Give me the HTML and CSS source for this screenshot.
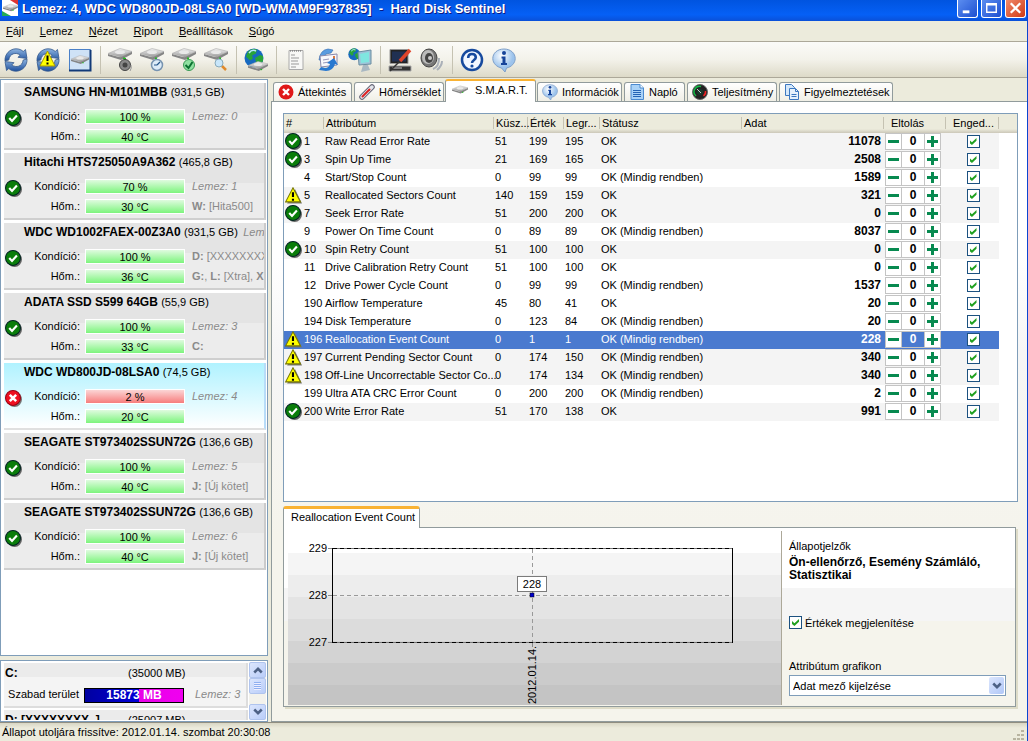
FILE: index.html
```html
<!DOCTYPE html>
<html lang="hu">
<head>
    <meta charset="UTF-8">
    <meta name="viewport" content="width=device-width, initial-scale=1.0">
    <title>Hard Disk Sentinel</title>
    <link rel="stylesheet" href="styles.css">
</head>
<body>
    <!-- Shared icons -->
    <svg class="defs" width="0" height="0">
        <linearGradient id="gDisk" x2="0" y2="1"><stop offset="0" stop-color="#f4f4f4"/><stop offset="1" stop-color="#999"/></linearGradient>
        <linearGradient id="gBlue" x2="0" y2="1"><stop offset="0" stop-color="#8fb6e2"/><stop offset="1" stop-color="#1d4f9c"/></linearGradient>
        <radialGradient id="gBall" cx=".4" cy=".3"><stop offset="0" stop-color="#fff"/><stop offset="1" stop-color="#9cc3ec"/></radialGradient>
        <symbol id="ok" viewBox="0 0 16 16">
            <circle cx="9" cy="9" r="7" fill="#666"/><circle cx="7.5" cy="7.5" r="7" fill="#0a7d0a" stroke="#022"/>
            <path d="M4 7.5l2.6 2.8L11.200 5.200" fill="none" stroke="#fff" stroke-width="2"/>
        </symbol>
        <symbol id="bad" viewBox="0 0 16 16">
            <circle cx="9" cy="9" r="7" fill="#777"/><circle cx="7.500" cy="7.500" r="7" fill="#ee1020" stroke="#901"/>
            <path d="M4.500 4.500l6 6M10.500 4.500l-6 6" stroke="#fff" stroke-width="2.400"/>
        </symbol>
        <symbol id="warn" viewBox="0 0 16 16">
            <path d="M9.500 2L16 15.500H2z" fill="#777"/><path d="M7.500.8L14.600 14H.6z" fill="#ff0" stroke="#770"/>
            <path d="M7.500 5v4.500M7.500 11v2" stroke="#000" stroke-width="2"/>
        </symbol>
        <symbol id="disk" viewBox="0 0 24 12">
            <path d="M0 6v2l13 4 11-6V3.500L11 9z" fill="#858585"/>
            <path d="M0 5.500L12 .5l12 3L12.500 9z" fill="url(#gDisk)" stroke="#aaa" stroke-width=".6"/>
            <ellipse cx="12" cy="4.300" rx="5" ry="1.800" fill="#e9e9e9"/><path d="M15 9.500h2v1.500h-2z" fill="#2b2"/>
        </symbol>
        <symbol id="sync" viewBox="0 0 24 24">
            <path d="M1 13C.5 6 6 .8 12 .8c3 0 5.500 1 7.200 2.700L21.500 1.500l1.500 9-9-1.200 2.200-2.200C12 3.800 5.500 5.500 4.800 12z" fill="url(#gBlue)" stroke="#34588c" stroke-width=".8"/>
            <path d="M23 11c.5 7-5 12.200-11 12.200-3 0-5.500-1-7.200-2.700L2.500 22.500 1 13.500l9 1.200-2.200 2.200C12 20.200 18.500 18.500 19.200 12z" fill="url(#gBlue)" stroke="#34588c" stroke-width=".8"/>
        </symbol>
        <symbol id="globe" viewBox="0 0 24 24">
            <circle cx="10" cy="10" r="9.500" fill="#1769c0"/>
            <path d="M4 3.500C7 .5 11 .5 13 1.500l-1 4-4 2 1 3-3 2-4-4zM11 10l5-3 3 1v5l-4 5-3-4z" fill="#28a43a"/>
            <path d="M5 5q3-4 7-2" stroke="#b9e6ff" fill="none" stroke-width="1.500"/>
        </symbol>
        <symbol id="speaker" viewBox="0 0 24 24">
            <ellipse cx="9" cy="10" rx="8" ry="9" fill="#777" stroke="#444"/><ellipse cx="8" cy="9" rx="6" ry="7" fill="#bbb"/>
            <ellipse cx="9" cy="10" rx="4" ry="5" fill="#444"/><circle cx="10" cy="10" r="2" fill="#ccc"/>
            <path d="M13 21q6-2 6-11M17 22q5-4 5-9" stroke="#aab0b8" stroke-width="2" fill="none"/>
        </symbol>
        <symbol id="info" viewBox="0 0 24 24">
            <path d="M12 1C5 1 .8 5.500.8 10.500S5 19 9.500 20l3.500 4 1.500-4c5-1 8.700-5 8.700-9.500C23.200 5.500 19 1 12 1z" fill="url(#gBall)" stroke="#7e9fc8"/>
            <circle cx="12" cy="5" r="2" fill="#17449a"/><path d="M9.500 8.500h4V15h1.500v2H9v-2h1.500v-4.500h-1z" fill="#17449a"/>
        </symbol>
        <symbol id="up" viewBox="0 0 8 6"><path d="M1 5l3-3 3 3" fill="none" stroke="#4d6185" stroke-width="2"/></symbol>
        <symbol id="down" viewBox="0 0 8 6"><path d="M1 1l3 3 3-3" fill="none" stroke="#4d6185" stroke-width="2"/></symbol>
    </svg>

    <!-- Title bar -->
    <header class="titlebar">
        <svg class="app-icon" viewBox="0 0 16 16"><path fill="#fff" d="M0 0h16v16H0z"/><path fill="#d33" d="M8 0h8v5z"/><path fill="#2a5" d="M0 11l9 5H0z"/><use href="#disk" x="1" y="3" width="15" height="9"/></svg>
        <h1>Lemez: 4, WDC WD800JD-08LSA0 [WD-WMAM9F937835] &nbsp;-&nbsp; Hard Disk Sentinel</h1>
        <div class="window-buttons">
            <button type="button" aria-label="Kis méret"><svg viewBox="0 0 20 17"><path d="M5 12h7" stroke="#fff" stroke-width="3"/></svg></button>
            <button type="button" aria-label="Teljes méret"><svg viewBox="0 0 20 17"><path d="M5 3.500h10v9H5zM5 4.500h10" fill="none" stroke="#fff" stroke-width="1.500"/></svg></button>
            <button type="button" class="close" aria-label="Bezárás"><svg viewBox="0 0 20 17"><path d="M5 3l10 10M15 3L5 13" stroke="#fff" stroke-width="2.400"/></svg></button>
        </div>
    </header>

    <!-- Menu -->
    <nav class="menu">
        <a href="#"><u>F</u>ájl</a>
        <a href="#"><u>L</u>emez</a>
        <a href="#"><u>N</u>ézet</a>
        <a href="#"><u>R</u>iport</a>
        <a href="#"><u>B</u>eállítások</a>
        <a href="#"><u>S</u>úgó</a>
    </nav>

    <!-- Toolbar -->
    <div class="toolbar">
        <button type="button" aria-label="Frissítés"><svg viewBox="0 0 24 24"><use href="#sync"/></svg></button>
        <button type="button" aria-label="Figyelmeztetés"><svg viewBox="0 0 24 24"><use href="#sync"/><path d="M11.500 3L19 18H4z" fill="#ff0" stroke="#a90"/><path d="M11.500 7.500v5.500M11.500 14.500v2" stroke="#000" stroke-width="2"/></svg></button>
        <button type="button" aria-label="Lemez"><svg viewBox="0 0 24 24"><path d="M1.500 1.500h21v21h-21z" fill="#cfe2f6" stroke="#4a80c8"/><path d="M1 22.500h21.500V2" fill="none" stroke="#123a78" stroke-width="2"/><use href="#disk" x="3" y="6" width="18" height="11"/></svg></button>
        <span class="sep"></span>
        <button type="button" aria-label="Hang teszt"><svg viewBox="0 0 24 24"><use href="#disk" width="24" height="12"/><path d="M17 10v4" stroke="#2b2" stroke-width="2"/><circle cx="17" cy="17" r="5.500" fill="#888" stroke="#444"/><circle cx="17" cy="17" r="2.500" fill="#444"/><path d="M22 23q2-3 1-6" stroke="#999" fill="none"/></svg></button>
        <button type="button" aria-label="Időzítés"><svg viewBox="0 0 24 24"><use href="#disk" width="24" height="12"/><circle cx="17" cy="17" r="5.500" fill="#dcebf8" stroke="#7793b0" stroke-width="1.500"/><path d="M17 17l3-3M17 17h-3" stroke="#258" stroke-width="1.200"/></svg></button>
        <button type="button" aria-label="Ellenőrzés"><svg viewBox="0 0 24 24"><use href="#disk" width="24" height="12"/><circle cx="17" cy="17" r="5.500" fill="#8fe0a0" stroke="#3a9a55"/><path d="M13.500 17l3 3 4-6" fill="none" stroke="#0a7030" stroke-width="2"/></svg></button>
        <button type="button" aria-label="Keresés"><svg viewBox="0 0 24 24"><use href="#disk" width="24" height="12"/><path d="M17 17l5 5" stroke="#e08a2c" stroke-width="2.500"/><circle cx="15" cy="15" r="4" fill="#c8e6fa" stroke="#8ab"/></svg></button>
        <span class="sep"></span>
        <button type="button" aria-label="Hálózat"><svg viewBox="0 0 24 24"><use href="#globe"/><use href="#disk" x="4" y="12" width="20" height="12"/></svg></button>
        <span class="sep"></span>
        <button type="button" aria-label="Jelentés"><svg viewBox="0 0 24 24"><path d="M5 2.500h14v19H5z" fill="#f8f8f6" stroke="#aaa"/><path d="M7 7h4M7 10h8M7 13h7M7 16h8M7 19h5" stroke="#999"/><path d="M6 3h12" stroke="#666" stroke-dasharray="1 1"/></svg></button>
        <button type="button" aria-label="Küldés"><svg viewBox="0 0 24 24"><path d="M3 12Q4 2 12 1l5 1-2 3-5 1-3 6z" fill="#5a9ce0" stroke="#2a66b0" stroke-width=".6"/><path d="M4 8l17-2v11L5 19z" fill="#f8f8fc" stroke="#88a"/><path d="M7 12l6-1M7 15l6-1" stroke="#99b"/><path d="M17 8h2v3h-2z" fill="#e07a3a"/><path d="M3 22l2-3 4 1q4 0 5-4l-3-1 7-5 4 7-3-1q-2 7-9 7z" fill="#2878d0"/></svg></button>
        <button type="button" aria-label="Web"><svg viewBox="0 0 24 24"><use href="#globe" width="15" height="15"/><path d="M10 4l13-2v14l-12 1z" fill="#9ec3d8" stroke="#6b8ca0"/><path d="M12 6l9-2v10l-8 1z" fill="#7fe6e0"/><path d="M15 17h5l2 5-9 2z" fill="#a9b8c2"/></svg></button>
        <span class="sep"></span>
        <button type="button" aria-label="Beállítások"><svg viewBox="0 0 24 24"><path d="M2 1.500h18v14H2z" fill="#222" stroke="#999"/><path d="M4 3.500h14v10H4z" fill="#203052"/><path d="M1 18h22v5H1z" fill="#333" stroke="#aaa"/><path d="M4 20h10" stroke="#ccc"/><path d="M2 23l12-12" stroke="#333" stroke-width="1.500"/><path d="M12 13L22 2" stroke="#e0442a" stroke-width="3.500"/></svg></button>
        <button type="button" aria-label="Hang"><svg viewBox="0 0 24 24"><use href="#speaker"/></svg></button>
        <span class="sep"></span>
        <button type="button" aria-label="Súgó"><svg viewBox="0 0 24 24"><circle cx="12" cy="12" r="10" fill="#f2f7ff" stroke="#174a9e" stroke-width="2.500"/><path d="M8.200 10Q8.200 6 12 6t3.800 3.500C15.800 12 12 12 12 15" fill="none" stroke="#174a9e" stroke-width="2.600"/><circle cx="12" cy="18" r="1.600" fill="#174a9e"/></svg></button>
        <button type="button" aria-label="Névjegy"><svg viewBox="0 0 24 24"><use href="#info"/></svg></button>
    </div>

    <main>
        <!-- Disk list -->
        <aside>
            <div class="disks">
                <section class="disk">
                    <h2>SAMSUNG HN-M101MBB <span>(931,5 GB)</span></h2>
                    <svg class="state"><use href="#ok"/></svg>
                    <span class="label">Kondíció:</span><span class="bar">100 %</span><i>Lemez: 0</i>
                    <span class="label">Hőm.:</span><span class="bar">40 °C</span><span class="vol"></span>
                </section>
                <section class="disk">
                    <h2>Hitachi HTS725050A9A362 <span>(465,8 GB)</span></h2>
                    <svg class="state"><use href="#ok"/></svg>
                    <span class="label">Kondíció:</span><span class="bar">70 %</span><i>Lemez: 1</i>
                    <span class="label">Hőm.:</span><span class="bar">30 °C</span><span class="vol"><b>W:</b> [Hita500]</span>
                </section>
                <section class="disk">
                    <h2>WDC WD1002FAEX-00Z3A0 <span>(931,5 GB)</span> <i>Lemez: 2</i></h2>
                    <svg class="state"><use href="#ok"/></svg>
                    <span class="label">Kondíció:</span><span class="bar">100 %</span><span class="vol"><b>D:</b> [XXXXXXXX]</span>
                    <span class="label">Hőm.:</span><span class="bar">36 °C</span><span class="vol"><b>G:</b>, <b>L:</b> [Xtra], <b>X:</b></span>
                </section>
                <section class="disk">
                    <h2>ADATA SSD S599 64GB <span>(55,9 GB)</span></h2>
                    <svg class="state"><use href="#ok"/></svg>
                    <span class="label">Kondíció:</span><span class="bar">100 %</span><i>Lemez: 3</i>
                    <span class="label">Hőm.:</span><span class="bar">33 °C</span><span class="vol"><b>C:</b></span>
                </section>
                <section class="disk selected">
                    <h2>WDC WD800JD-08LSA0 <span>(74,5 GB)</span></h2>
                    <svg class="state"><use href="#bad"/></svg>
                    <span class="label">Kondíció:</span><span class="bar low">2 %</span><i>Lemez: 4</i>
                    <span class="label">Hőm.:</span><span class="bar">20 °C</span><span class="vol"></span>
                </section>
                <section class="disk">
                    <h2>SEAGATE ST973402SSUN72G <span>(136,6 GB)</span></h2>
                    <svg class="state"><use href="#ok"/></svg>
                    <span class="label">Kondíció:</span><span class="bar">100 %</span><i>Lemez: 5</i>
                    <span class="label">Hőm.:</span><span class="bar">40 °C</span><span class="vol"><b>J:</b> [Új kötet]</span>
                </section>
                <section class="disk">
                    <h2>SEAGATE ST973402SSUN72G <span>(136,6 GB)</span></h2>
                    <svg class="state"><use href="#ok"/></svg>
                    <span class="label">Kondíció:</span><span class="bar">100 %</span><i>Lemez: 6</i>
                    <span class="label">Hőm.:</span><span class="bar">40 °C</span><span class="vol"><b>J:</b> [Új kötet]</span>
                </section>
            </div>

            <!-- Partitions -->
            <div class="partitions">
                <div class="partition-list">
                    <section class="partition">
                        <b>C:</b><span class="size">(35000 MB)</span>
                        <span class="label">Szabad terület</span><span class="space">15873 MB</span><i>Lemez: 3</i>
                    </section>
                    <section class="partition">
                        <b>D: [XXXXXXXX_]</b><span class="size">(25007 MB)</span>
                    </section>
                </div>
                <div class="scrollbar">
                    <button type="button" aria-label="Fel"><svg width="10" height="8"><use href="#up"/></svg></button>
                    <span class="thumb"></span>
                    <button type="button" class="last" aria-label="Le"><svg width="10" height="8"><use href="#down"/></svg></button>
                </div>
            </div>
        </aside>

        <div class="content">
            <!-- Tabs -->
            <div class="tabs">
                <button type="button"><svg viewBox="0 0 16 16"><circle cx="8" cy="8" r="7.500" fill="#e01818"/><path d="M5 5l6 6M11 5l-6 6" stroke="#fff" stroke-width="2.400"/></svg>Áttekintés</button>
                <button type="button"><svg viewBox="0 0 16 16"><path d="M3 13L13 3" stroke="#667" stroke-width="5.500" stroke-linecap="round"/><path d="M3 13L13 3" stroke="#e4e6ec" stroke-width="3.500" stroke-linecap="round"/><path d="M3.500 12.500l7-7" stroke="#d22" stroke-width="2" stroke-linecap="round"/></svg>Hőmérséklet</button>
                <button type="button" class="active"><svg viewBox="0 0 16 16"><use href="#disk" y="3" width="16" height="9"/></svg>S.M.A.R.T.</button>
                <button type="button"><svg viewBox="0 0 24 24"><use href="#info"/></svg>Információk</button>
                <button type="button"><svg viewBox="0 0 16 16"><path d="M2 .5h9L14.500 4v11.500H2z" fill="#a9d2f7" stroke="#4a8ad0"/><path d="M11 .5V4h3.500" fill="#fff" stroke="#4a8ad0"/><path d="M4 6.500h8M4 8.500h8M4 10.500h8M4 12.500h8" stroke="#2463b4"/></svg>Napló</button>
                <button type="button"><svg viewBox="0 0 16 16"><circle cx="8" cy="8" r="7.500" fill="#222" stroke="#666"/><path d="M4 12A5.500 5.500 0 0 1 9 2.500" fill="none" stroke="#1b4" stroke-width="1.500"/><path d="M13.500 7a5.500 5.500 0 0 1-2 5" fill="none" stroke="#e22" stroke-width="1.500"/><circle cx="8" cy="8" r="3" fill="#173a2c"/><path d="M5 5l4 4" stroke="#ccc"/></svg>Teljesítmény</button>
                <button type="button"><svg viewBox="0 0 16 16"><path d="M1.500.5h6l3 3v8h-9z" fill="#d5e8fa" stroke="#3c78c0"/><path d="M5.500 4.500h6l3 3v8h-9z" fill="#e6f2fd" stroke="#3c78c0"/><path d="M11.500 4.500v3h3M7.500 10.500h5M7.500 12.500h5" fill="none" stroke="#3c78c0"/></svg>Figyelmeztetések</button>
            </div>

            <div class="page">
                <!-- S.M.A.R.T. attributes -->
                <div class="grid-box">
                    <table>
                        <colgroup><col class="c-id"><col class="c-name"><col class="c-thr"><col class="c-val"><col class="c-val"><col class="c-status"><col><col class="c-off"><col class="c-on"><col class="c-end"></colgroup>
                        <thead>
                            <tr><th>#</th><th>Attribútum</th><th>Küsz...</th><th>Érték</th><th>Legr...</th><th>Státusz</th><th>Adat</th><th class="off">Eltolás</th><th class="off">Enged...</th><th></th></tr>
                        </thead>
                        <tbody>
                            <tr class="shade"><td><svg><use href="#ok"/></svg>1</td><td>Raw Read Error Rate</td><td>51</td><td>199</td><td>195</td><td>OK</td><td>11078</td><td><div class="spin"><button type="button" class="minus" aria-label="Csökkentés"></button><input type="text" value="0" aria-label="Eltolás"><button type="button" class="plus" aria-label="Növelés"></button></div></td><td><input type="checkbox" checked aria-label="Engedélyezve"></td><td></td></tr>
                            <tr class="shade"><td><svg><use href="#ok"/></svg>3</td><td>Spin Up Time</td><td>21</td><td>169</td><td>165</td><td>OK</td><td>2508</td><td><div class="spin"><button type="button" class="minus" aria-label="Csökkentés"></button><input type="text" value="0" aria-label="Eltolás"><button type="button" class="plus" aria-label="Növelés"></button></div></td><td><input type="checkbox" checked aria-label="Engedélyezve"></td><td></td></tr>
                            <tr><td><svg></svg>4</td><td>Start/Stop Count</td><td>0</td><td>99</td><td>99</td><td>OK (Mindig rendben)</td><td>1589</td><td><div class="spin"><button type="button" class="minus" aria-label="Csökkentés"></button><input type="text" value="0" aria-label="Eltolás"><button type="button" class="plus" aria-label="Növelés"></button></div></td><td><input type="checkbox" checked aria-label="Engedélyezve"></td><td></td></tr>
                            <tr class="shade"><td><svg><use href="#warn"/></svg>5</td><td>Reallocated Sectors Count</td><td>140</td><td>159</td><td>159</td><td>OK</td><td>321</td><td><div class="spin"><button type="button" class="minus" aria-label="Csökkentés"></button><input type="text" value="0" aria-label="Eltolás"><button type="button" class="plus" aria-label="Növelés"></button></div></td><td><input type="checkbox" checked aria-label="Engedélyezve"></td><td></td></tr>
                            <tr class="shade"><td><svg><use href="#ok"/></svg>7</td><td>Seek Error Rate</td><td>51</td><td>200</td><td>200</td><td>OK</td><td>0</td><td><div class="spin"><button type="button" class="minus" aria-label="Csökkentés"></button><input type="text" value="0" aria-label="Eltolás"><button type="button" class="plus" aria-label="Növelés"></button></div></td><td><input type="checkbox" checked aria-label="Engedélyezve"></td><td></td></tr>
                            <tr><td><svg></svg>9</td><td>Power On Time Count</td><td>0</td><td>89</td><td>89</td><td>OK (Mindig rendben)</td><td>8037</td><td><div class="spin"><button type="button" class="minus" aria-label="Csökkentés"></button><input type="text" value="0" aria-label="Eltolás"><button type="button" class="plus" aria-label="Növelés"></button></div></td><td><input type="checkbox" checked aria-label="Engedélyezve"></td><td></td></tr>
                            <tr class="shade"><td><svg><use href="#ok"/></svg>10</td><td>Spin Retry Count</td><td>51</td><td>100</td><td>100</td><td>OK</td><td>0</td><td><div class="spin"><button type="button" class="minus" aria-label="Csökkentés"></button><input type="text" value="0" aria-label="Eltolás"><button type="button" class="plus" aria-label="Növelés"></button></div></td><td><input type="checkbox" checked aria-label="Engedélyezve"></td><td></td></tr>
                            <tr><td><svg></svg>11</td><td>Drive Calibration Retry Count</td><td>51</td><td>100</td><td>100</td><td>OK</td><td>0</td><td><div class="spin"><button type="button" class="minus" aria-label="Csökkentés"></button><input type="text" value="0" aria-label="Eltolás"><button type="button" class="plus" aria-label="Növelés"></button></div></td><td><input type="checkbox" checked aria-label="Engedélyezve"></td><td></td></tr>
                            <tr><td><svg></svg>12</td><td>Drive Power Cycle Count</td><td>0</td><td>99</td><td>99</td><td>OK (Mindig rendben)</td><td>1537</td><td><div class="spin"><button type="button" class="minus" aria-label="Csökkentés"></button><input type="text" value="0" aria-label="Eltolás"><button type="button" class="plus" aria-label="Növelés"></button></div></td><td><input type="checkbox" checked aria-label="Engedélyezve"></td><td></td></tr>
                            <tr><td><svg></svg>190</td><td>Airflow Temperature</td><td>45</td><td>80</td><td>41</td><td>OK</td><td>20</td><td><div class="spin"><button type="button" class="minus" aria-label="Csökkentés"></button><input type="text" value="0" aria-label="Eltolás"><button type="button" class="plus" aria-label="Növelés"></button></div></td><td><input type="checkbox" checked aria-label="Engedélyezve"></td><td></td></tr>
                            <tr><td><svg></svg>194</td><td>Disk Temperature</td><td>0</td><td>123</td><td>84</td><td>OK (Mindig rendben)</td><td>20</td><td><div class="spin"><button type="button" class="minus" aria-label="Csökkentés"></button><input type="text" value="0" aria-label="Eltolás"><button type="button" class="plus" aria-label="Növelés"></button></div></td><td><input type="checkbox" checked aria-label="Engedélyezve"></td><td></td></tr>
                            <tr class="current"><td><svg><use href="#warn"/></svg>196</td><td>Reallocation Event Count</td><td>0</td><td>1</td><td>1</td><td>OK (Mindig rendben)</td><td>228</td><td><div class="spin"><button type="button" class="minus" aria-label="Csökkentés"></button><input type="text" value="0" aria-label="Eltolás"><button type="button" class="plus" aria-label="Növelés"></button></div></td><td><input type="checkbox" checked aria-label="Engedélyezve"></td><td></td></tr>
                            <tr class="shade"><td><svg><use href="#warn"/></svg>197</td><td>Current Pending Sector Count</td><td>0</td><td>174</td><td>150</td><td>OK (Mindig rendben)</td><td>340</td><td><div class="spin"><button type="button" class="minus" aria-label="Csökkentés"></button><input type="text" value="0" aria-label="Eltolás"><button type="button" class="plus" aria-label="Növelés"></button></div></td><td><input type="checkbox" checked aria-label="Engedélyezve"></td><td></td></tr>
                            <tr class="shade"><td><svg><use href="#warn"/></svg>198</td><td>Off-Line Uncorrectable Sector Co...</td><td>0</td><td>174</td><td>134</td><td>OK (Mindig rendben)</td><td>340</td><td><div class="spin"><button type="button" class="minus" aria-label="Csökkentés"></button><input type="text" value="0" aria-label="Eltolás"><button type="button" class="plus" aria-label="Növelés"></button></div></td><td><input type="checkbox" checked aria-label="Engedélyezve"></td><td></td></tr>
                            <tr><td><svg></svg>199</td><td>Ultra ATA CRC Error Count</td><td>0</td><td>200</td><td>200</td><td>OK (Mindig rendben)</td><td>2</td><td><div class="spin"><button type="button" class="minus" aria-label="Csökkentés"></button><input type="text" value="0" aria-label="Eltolás"><button type="button" class="plus" aria-label="Növelés"></button></div></td><td><input type="checkbox" checked aria-label="Engedélyezve"></td><td></td></tr>
                            <tr class="shade"><td><svg><use href="#ok"/></svg>200</td><td>Write Error Rate</td><td>51</td><td>170</td><td>138</td><td>OK</td><td>991</td><td><div class="spin"><button type="button" class="minus" aria-label="Csökkentés"></button><input type="text" value="0" aria-label="Eltolás"><button type="button" class="plus" aria-label="Növelés"></button></div></td><td><input type="checkbox" checked aria-label="Engedélyezve"></td><td></td></tr>
                        </tbody>
                    </table>
                </div>

                <!-- Attribute details -->
                <div class="detail-tab">Reallocation Event Count</div>
                <div class="detail">
                    <div class="chart">
                        <svg width="494" height="174">
                            <path d="M40 17.500h5M40 64.500h5M40 111.500h5M244.500 112v4" stroke="#888"/>
                            <path d="M45 64.500h400M244.500 18v94" stroke="#999" stroke-dasharray="4 3"/>
                            <path d="M45 17.500h400M45 111.500h400" stroke="#777"/>
                            <path d="M45 17.500h400M45 111.500h400" stroke="#000" stroke-dasharray="4 3"/>
                            <path d="M44.500 17v95M444.500 17v95" stroke="#000"/>
                            <rect x="229.500" y="45.500" width="29" height="15" fill="#fff" stroke="#000" stroke-dasharray="1 1"/>
                            <rect x="242" y="62" width="4" height="4" fill="#00c" stroke="#000" stroke-width=".5"/>
                            <text x="244" y="57" text-anchor="middle">228</text>
                            <text x="39" y="21" text-anchor="end">229</text>
                            <text x="39" y="68" text-anchor="end">228</text>
                            <text x="39" y="115" text-anchor="end">227</text>
                            <text transform="translate(248 173) rotate(-90)">2012.01.14.</text>
                        </svg>
                    </div>
                    <div class="info">
                        <p>Állapotjelzők</p>
                        <p class="flags">Ön-ellenőrző, Esemény Számláló, Statisztikai</p>
                        <label class="show"><input type="checkbox" checked>Értékek megjelenítése</label>
                        <label for="graph">Attribútum grafikon</label>
                        <div class="select">
                            <select id="graph"><option>Adat mező kijelzése</option></select>
                            <span class="arrow"><svg width="10" height="8"><use href="#down"/></svg></span>
                        </div>
                    </div>
                </div>
            </div>
        </div>
    </main>

    <footer>
        <span>Állapot utoljára frissítve: 2012.01.14. szombat 20:30:08</span>
        <svg width="12" height="12"><path d="M8 1h3v2H8zM4 5h3v2H4zM8 5h3v2H8zM0 9h3v2H0zM4 9h3v2H4zM8 9h3v2H8z" fill="#b8b4a0"/></svg>
    </footer>
</body>
</html>
```

FILE: styles.css
```css
* {
    margin: 0;
    padding: 0;
    box-sizing: border-box;
}

body {
    display: flex;
    flex-direction: column;
    min-height: 100vh;
    font-family: "Liberation Sans", Arial, sans-serif;
    font-size: 11px;
    line-height: 14px;
    color: #000;
    background: #ecebdc;
    border-right: 1px solid #0b46d0;
}

button, input, select {
    font: inherit;
    color: inherit;
    border: 0;
    background: none;
}

.defs {
    position: absolute;
}

/* Title bar */
.titlebar {
    display: flex;
    align-items: flex-start;
    height: 21px;
    padding-left: 2px;
    background: linear-gradient(#0054e0, #0560f6 70%, #0a50d8);
    color: #fff;
}

.app-icon {
    width: 16px;
    height: 16px;
    margin-right: 4px;
}

.titlebar h1 {
    flex: 1;
    font-size: 13px;
    line-height: 17px;
    white-space: nowrap;
    text-shadow: 1px 1px #0a1883;
}

.window-buttons {
    display: flex;
    gap: 3px;
    padding-right: 1px;
}

.window-buttons button {
    width: 21px;
    height: 18px;
    border: 1px solid #fff;
    border-top: 0;
    border-radius: 0 0 3px 3px;
    background: linear-gradient(135deg, #5b8df0, #1d4fd0);
}

.window-buttons .close {
    background: linear-gradient(135deg, #f08a6c, #d03a14);
}

.window-buttons svg {
    display: block;
    width: 19px;
    height: 17px;
}

/* Menu */
.menu {
    display: flex;
    gap: 16px;
    height: 21px;
    padding: 3px 6px;
    border-bottom: 1px solid #aca899;
}

.menu a {
    color: #000;
    text-decoration: none;
}

/* Toolbar */
.toolbar {
    display: flex;
    align-items: center;
    height: 36px;
    background: linear-gradient(#fbfbf8, #f3f2ea 50%, #dddac8);
    border-bottom: 1px solid #aca899;
}

.toolbar button {
    width: 32px;
    height: 32px;
}

.toolbar svg {
    display: block;
    width: 24px;
    height: 24px;
    margin: 0 auto;
}

.sep {
    width: 8px;
    height: 28px;
    background: linear-gradient(#c5c2b2, #c5c2b2) center / 1px 100% no-repeat;
}

/* Left side */
main {
    display: flex;
    flex: 1;
    padding-top: 1px;
}

aside {
    display: flex;
    flex-direction: column;
    gap: 4px;
    width: 268px;
    margin-right: 3px;
}

.disks {
    flex: 1;
    padding: 3px 1px 0 3px;
    background: #fff;
    border: 1px solid #7f9db9;
}

.disk {
    display: grid;
    grid-template-columns: 18px 52px 100px 1fr;
    column-gap: 5px;
    grid-template-rows: 24px 20px 20px;
    height: 67px;
    margin-bottom: 3px;
    padding-left: 1px;
    overflow: hidden;
    white-space: nowrap;
    background: linear-gradient(#e4e4e4 30px, #ececec 30px);
    border-right: 2px solid #cbcbcb;
    border-bottom: 2px solid #cfcfcf;
}

.disk.selected {
    background: linear-gradient(#b0f2ff, #fff);
    border-color: #bfe3f0 #b8dcf8 #e0e0e0;
}

.disk h2 {
    grid-column: 1 / -1;
    padding-left: 19px;
    font-size: 12px;
    line-height: 18px;
}

.disk h2 span, .disk h2 i {
    font-size: 11px;
    font-weight: normal;
}

.state {
    grid-row: 2 / 4;
    width: 17px;
    height: 17px;
    margin-top: 3px;
}

.disk .label {
    margin-left: -5px;
    line-height: 18px;
    text-align: right;
}

.bar {
    height: 15px;
    margin-top: 2px;
    line-height: 14px;
    text-align: center;
    border: 1px solid #fff;
    background: linear-gradient(#dffbdf, #7df47d);
}

.bar.low {
    background: linear-gradient(#fbd5d5, #f77d7d);
}

.disk i, .vol, .partition i {
    color: #8a8a8a;
    line-height: 18px;
    padding-left: 2px;
}

/* Partitions */
.partitions {
    display: flex;
    height: 62px;
    padding: 1px;
    background: #fff;
    border: 1px solid #7f9db9;
}

.partition-list {
    flex: 1;
    overflow: hidden;
    padding: 1px 1px 0 2px;
    height: 58px;
}

.partition {
    display: grid;
    grid-template-columns: 74px 100px 1fr;
    column-gap: 5px;
    grid-template-rows: 21px 23px;
    height: 45px;
    padding-left: 1px;
    margin-bottom: 2px;
    white-space: nowrap;
    line-height: 20px;
    background: linear-gradient(#ebebeb 14px, #f4f4f4 14px);
    border-right: 2px solid #ddd;
    border-bottom: 2px solid #ddd;
}

.size {
    grid-column: 2 / 4;
    padding-left: 44px;
}

.partition b {
    font-size: 12px;
}

.partition .label {
    text-align: right;
    line-height: 21px;
}

.space {
    height: 15px;
    margin-top: 4px;
    font-size: 12px;
    font-weight: bold;
    line-height: 13px;
    text-align: center;
    color: #fff;
    border: 1px solid #000;
    background: linear-gradient(90deg, #0000a0, #0000d8 55%, #e800e8 55%, #f000f0);
}

.partition i {
    padding-left: 6px;
    line-height: 21px;
}

.scrollbar {
    display: flex;
    flex-direction: column;
    width: 17px;
    background: #f3f2ec;
}

.scrollbar button, .thumb {
    display: flex;
    align-items: center;
    justify-content: center;
    height: 16px;
    border: 1px solid #b0c4ee;
    border-radius: 2px;
    background: linear-gradient(135deg, #dce6fd, #b9cdf9);
}

.thumb::before {
    content: "";
    width: 7px;
    height: 8px;
    background: repeating-linear-gradient(#8fb0f0 0 1px, #eef 1px 2px);
}

.scrollbar .last {
    margin-top: auto;
}

/* Tabs */
.content {
    flex: 1;
    display: flex;
    flex-direction: column;
    min-width: 0;
}

.tabs {
    display: grid;
    grid-template-columns: 81px 92px 91px 87px 63px 92px 116px;
    height: 22px;
    padding-left: 2px;
}

.tabs button {
    display: flex;
    align-items: center;
    gap: 4px;
    margin: 3px 2px 0 0;
    padding-left: 4px;
    white-space: nowrap;
    border: 1px solid #919b9c;
    border-bottom: 0;
    border-radius: 3px 3px 0 0;
    background: linear-gradient(#fff, #f0efe6);
}

.tabs svg {
    flex: none;
    width: 16px;
    height: 16px;
}

.tabs .active {
    z-index: 1;
    gap: 7px;
    margin: 0 1px -1px -1px;
    padding: 0 0 3px 6px;
    border-top: 2px solid #f9b233;
    background: #fff;
}

.page {
    flex: 1;
    display: flex;
    flex-direction: column;
    padding: 11px 9px 14px 11px;
    border: 1px solid #919b9c;
    border-right: 0;
    background: linear-gradient(#fff 25%, #f6f6f6 40%, #f5f4ec 70%);
}

/* Attribute table */
.grid-box {
    flex: 1;
    margin-bottom: 4px;
    background: #fff;
    border: 1px solid #7f9db9;
}

table {
    width: 100%;
    table-layout: fixed;
    border-collapse: collapse;
}

.c-id { width: 40px; }
.c-name { width: 170px; }
.c-thr { width: 34px; }
.c-val { width: 36px; }
.c-status { width: 142px; }
.c-off { width: 62px; }
.c-on { width: 53px; }
.c-end { width: 18px; }

th {
    height: 19px;
    padding-left: 2px;
    padding-bottom: 1px;
    font-weight: normal;
    text-align: left;
    white-space: nowrap;
    background: linear-gradient(#c5c2b2, #c5c2b2) right 3px / 1px 12px no-repeat, linear-gradient(#ecebdc 15px, #cbc7b8);
}

th:last-child {
    background: linear-gradient(#ecebdc 15px, #cbc7b8);
}

th.off {
    padding-left: 7px;
}

td {
    height: 18px;
    padding-left: 1px;
    line-height: 17px;
    vertical-align: top;
    white-space: nowrap;
}

td svg {
    float: left;
    width: 17px;
    height: 17px;
    margin-right: 2px;
}

td:nth-child(7) {
    padding-right: 3px;
    font-size: 12px;
    font-weight: bold;
    text-align: right;
}

td:nth-child(9) {
    padding-top: 2px;
    line-height: 13px;
    text-align: center;
}

td input[type="checkbox"] {
    vertical-align: top;
}

.shade td:not(:last-child) {
    background: #f4f4f4;
}

.current td:not(:last-child) {
    color: #fff;
    background: #4a7acf;
}

.spin {
    display: grid;
    grid-template-columns: 15px 22px 15px;
    gap: 1px;
    width: 56px;
    height: 17px;
    padding: 1px;
    background: #c4c4c4;
}

.spin input {
    width: 22px;
    height: 15px;
    font-size: 12px;
    font-weight: bold;
    text-align: center;
    background: #fff;
}

.current .spin input {
    background: #4a7acf;
}

.spin button {
    display: flex;
    align-items: center;
    justify-content: center;
    height: 15px;
    background: #fff;
}

.spin button::before {
    content: "";
    width: 11px;
    height: 3px;
    background: #078a50;
}

.spin .plus::before {
    height: 11px;
    background: linear-gradient(#078a50, #078a50) center / 11px 3px no-repeat, linear-gradient(#078a50, #078a50) center / 3px 11px no-repeat;
}

input[type="checkbox"] {
    appearance: none;
    width: 13px;
    height: 13px;
    border: 1px solid #1c5180;
    background: #fff;
}

input[type="checkbox"]:checked::before {
    content: "";
    display: block;
    width: 7px;
    height: 7px;
    margin: 2px;
    background: #21a121;
    clip-path: polygon(0 30%, 35% 60%, 100% 0, 100% 40%, 35% 100%, 0 70%);
}

/* Attribute details */
.detail-tab {
    z-index: 1;
    align-self: flex-start;
    width: 137px;
    height: 22px;
    margin-bottom: -1px;
    padding: 0 7px;
    line-height: 16px;
    white-space: nowrap;
    border: 1px solid #919b9c;
    border-top: 3px solid #f9b233;
    border-bottom: 0;
    border-radius: 3px 3px 0 0;
    background: #fff;
}

.detail {
    display: flex;
    height: 180px;
    margin-right: 2px;
    padding: 3px 1px 1px 4px;
    background: linear-gradient(#fff 60px, #f5f5f5 60px 93px, #f5f4ec 93px);
    border: 1px solid #919b9c;
    box-shadow: 2px 2px #dedcc8;
}

.chart {
    flex: 1;
    overflow: hidden;
    border-right: 1px solid #aca899;
    background: linear-gradient(#fff 22px, #f5f5f5 22px 44px, #ededed 44px 66px, #e4e4e4 66px 88px, #dcdcdc 88px 110px, #d3d3d3 110px 132px, #cbcbcb 132px 154px, #c4c4c4 154px);
}

.chart svg {
    display: block;
}

.chart text {
    font-size: 11px;
}

.info {
    width: 232px;
    padding: 8px 8px 0 7px;
}

.flags {
    margin-top: 3px;
    margin-bottom: 34px;
    font-size: 12px;
    font-weight: bold;
    line-height: 13px;
}

.info label {
    display: block;
}

.info .show {
    display: flex;
    gap: 3px;
    margin-bottom: 29px;
}

.select {
    position: relative;
    width: 217px;
    margin-top: 2px;
}

.select select {
    display: block;
    width: 100%;
    height: 21px;
    padding-left: 3px;
    appearance: none;
    border: 1px solid #7f9db9;
    border-radius: 0;
    background: #fff;
}

.arrow {
    position: absolute;
    top: 2px;
    right: 2px;
    display: flex;
    align-items: center;
    justify-content: center;
    width: 15px;
    height: 17px;
    border-radius: 2px;
    pointer-events: none;
    background: linear-gradient(135deg, #dce6fd, #b0c7f7);
}

/* Status bar */
footer {
    display: flex;
    align-items: flex-end;
    justify-content: space-between;
    height: 19px;
    padding: 0 2px;
    line-height: 17px;
    border-top: 1px solid #8f8d80;
    background: linear-gradient(#d8d6c4, #ecebdc 5px);
}
```
